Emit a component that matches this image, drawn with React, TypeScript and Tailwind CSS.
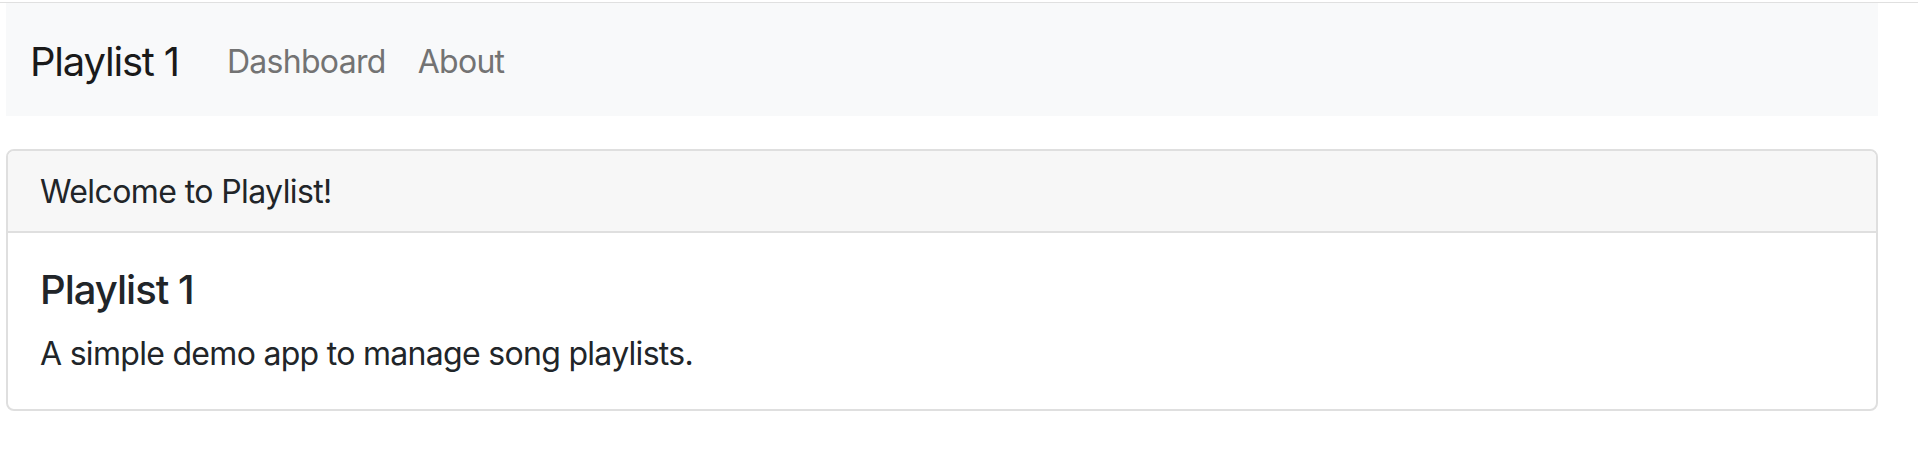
export default function App() {
  return (
    <div className="min-h-[462px] bg-white pt-[2px] font-['Inter',_'Liberation_Sans',_sans-serif] text-[#212529]">
      <div className="border-t border-[#e0e0e0]">
        {/* Navbar */}
        <nav className="ml-[6px] mr-[40px] flex h-[113px] items-center bg-[#f8f9fa] px-[24px] pt-[4px]">
          <a className="mr-[32px] py-[10px] text-[40px] leading-[60px] tracking-[-1.2px] text-[#1a1a1a]">
            Playlist 1
          </a>
          <div className="flex items-center">
            <a className="px-[16px] text-[32px] leading-[48px] tracking-[-0.7px] text-[#737373]">
              Dashboard
            </a>
            <a className="px-[16px] text-[32px] leading-[48px] tracking-[-0.7px] text-[#737373]">
              About
            </a>
          </div>
        </nav>

        {/* Card */}
        <div className="ml-[6px] mr-[40px] mt-[33px] rounded-[8px] border-2 border-[#dfdfdf]">
          <div className="rounded-t-[6px] border-b-2 border-[#dfdfdf] bg-[#f7f7f7] px-[32px] pb-[15px] pt-[17px] text-[32px] leading-[48px] tracking-[-0.6px]">
            Welcome to Playlist!
          </div>
          <div className="px-[32px] pb-[31px] pt-[33px]">
            <h5 className="mb-[16px] text-[40px] font-medium leading-[48px] tracking-[-1px]">
              Playlist 1
            </h5>
            <p className="text-[32px] leading-[48px] tracking-[-0.7px]">
              A simple demo app to manage song playlists.
            </p>
          </div>
        </div>
      </div>
    </div>
  );
}
